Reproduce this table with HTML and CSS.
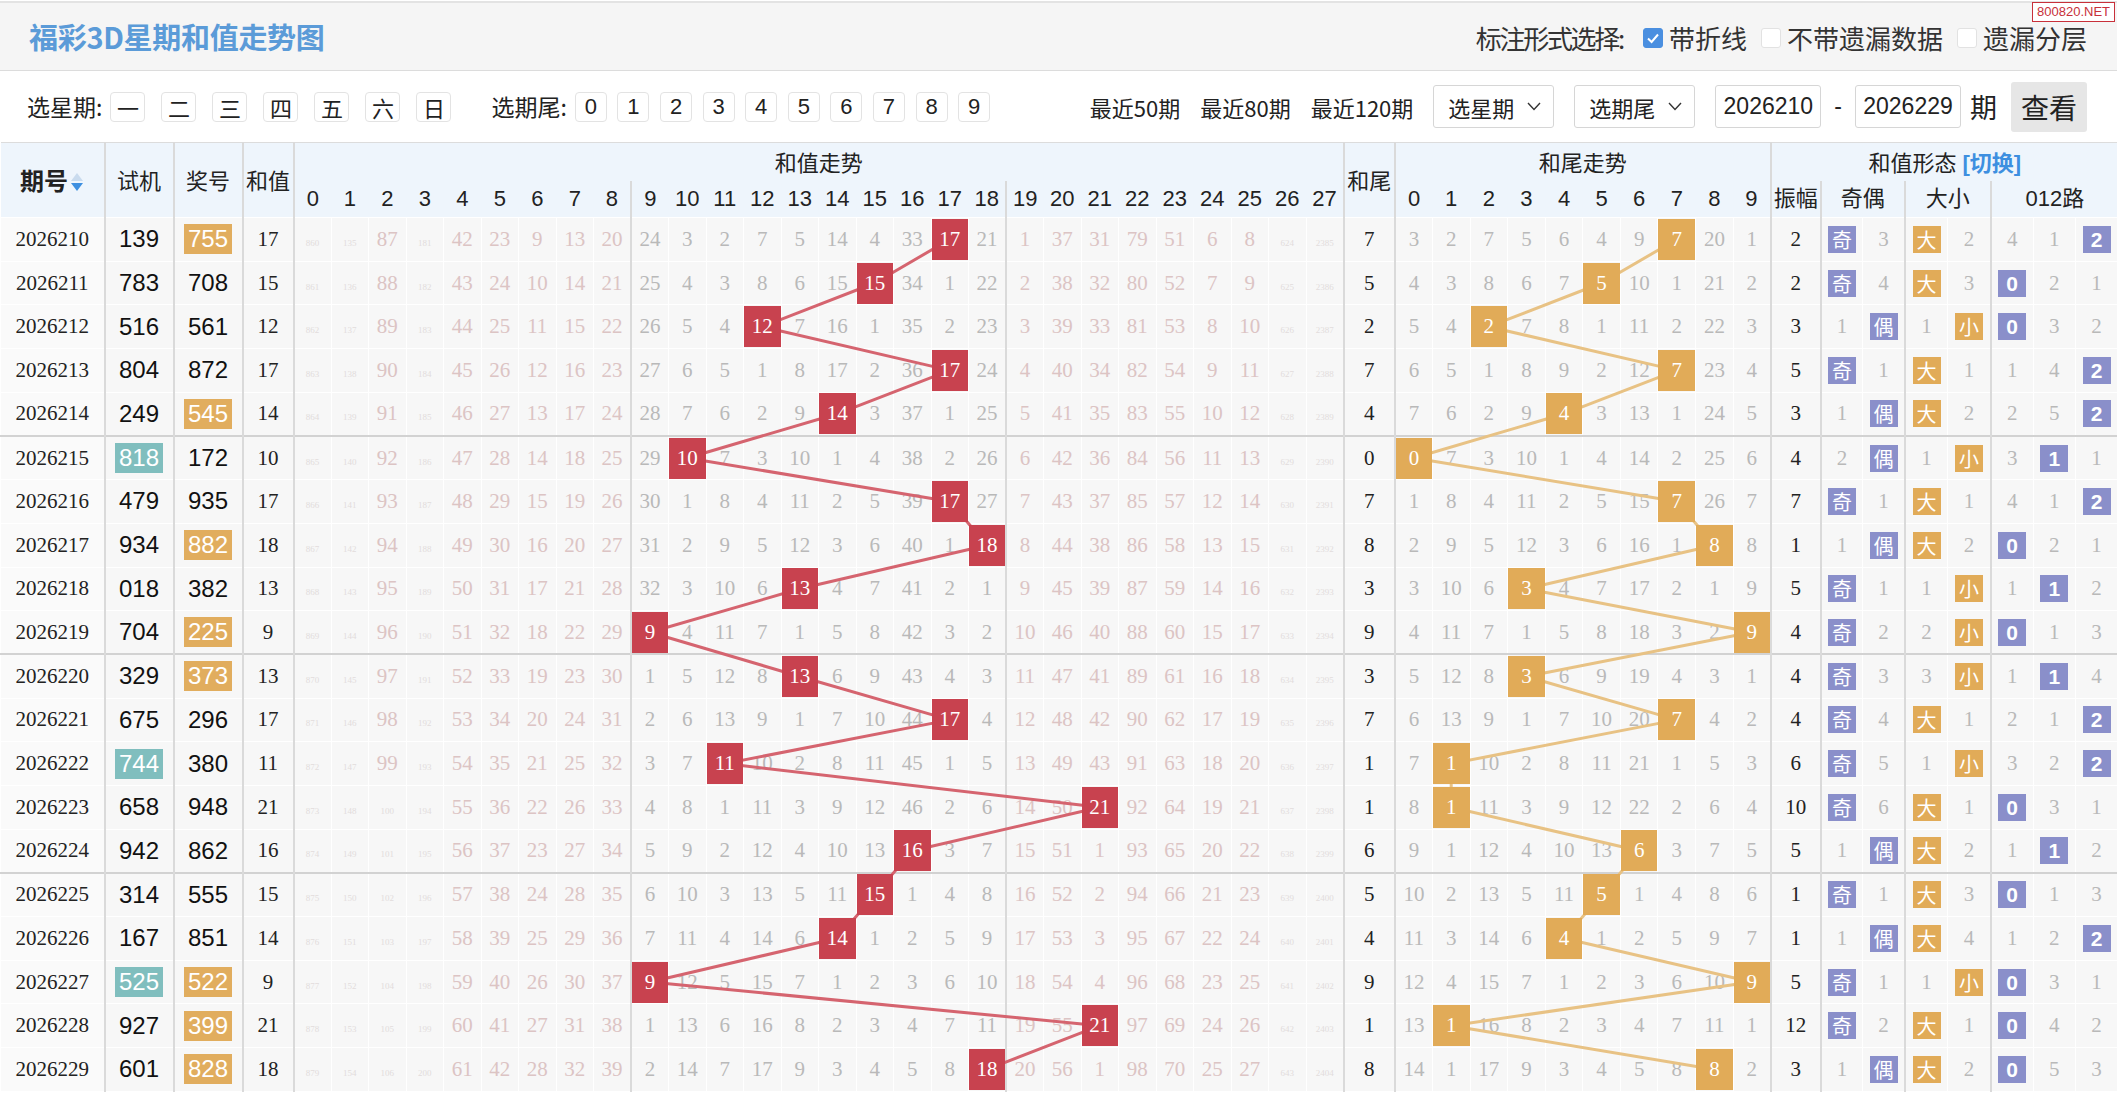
FILE: index.html
```html
<!DOCTYPE html>
<html lang="zh-CN">
<head>
<meta charset="utf-8">
<title>福彩3D星期和值走势图</title>
<link rel="stylesheet" href="styles.css">
</head>
<body>
<header class="topbar">
  <h1 class="title">福彩3D星期和值走势图</h1>
  <div class="marks">
    <span class="marks-label">标注形式选择:</span>
    <span class="opt"><span class="cb on"><svg viewBox="0 0 20 20" width="20" height="20"><path d="M5 10.5 L8.6 14 L15 6.5" fill="none" stroke="#fff" stroke-width="2"/></svg></span>带折线</span>
    <span class="opt"><span class="cb"></span>不带遗漏数据</span>
    <span class="opt"><span class="cb"></span>遗漏分层</span>
  </div>
  <div class="watermark">800820.NET</div>
</header>

<section class="controls">
  <div class="filters">
    <span class="lbl">选星期:</span>
    <span class="btn">一</span><span class="btn">二</span><span class="btn">三</span><span class="btn">四</span><span class="btn">五</span><span class="btn">六</span><span class="btn">日</span>
    <span class="lbl lbl-tail">选期尾:</span>
    <span class="btn dg">0</span><span class="btn dg">1</span><span class="btn dg">2</span><span class="btn dg">3</span><span class="btn dg">4</span><span class="btn dg">5</span><span class="btn dg">6</span><span class="btn dg">7</span><span class="btn dg">8</span><span class="btn dg">9</span>
  </div>
  <div class="range">
    <a class="recent">最近50期</a>
    <a class="recent">最近80期</a>
    <a class="recent">最近120期</a>
    <div class="sel">选星期<svg width="14" height="9" viewBox="0 0 14 9"><path d="M1 1 L7 7.5 L13 1" fill="none" stroke="#333" stroke-width="1.4"/></svg></div>
    <div class="sel">选期尾<svg width="14" height="9" viewBox="0 0 14 9"><path d="M1 1 L7 7.5 L13 1" fill="none" stroke="#333" stroke-width="1.4"/></svg></div>
    <input class="period" type="text" value="2026210">
    <span class="dash">-</span>
    <input class="period" type="text" value="2026229">
    <span class="qi">期</span>
    <button class="go" type="button">查看</button>
  </div>
</section>

<div class="chart" id="chart">
  <table class="trend">
    <colgroup>
      <col class="w-qh"><col class="w-sj"><col class="w-jh"><col class="w-hz">
      <col class="w-n"><col class="w-n"><col class="w-n"><col class="w-n"><col class="w-n"><col class="w-n"><col class="w-n"><col class="w-n"><col class="w-n"><col class="w-n">
      <col class="w-n"><col class="w-n"><col class="w-n"><col class="w-n"><col class="w-n"><col class="w-n"><col class="w-n"><col class="w-n"><col class="w-n"><col class="w-n">
      <col class="w-n"><col class="w-n"><col class="w-n"><col class="w-n"><col class="w-n"><col class="w-n"><col class="w-n"><col class="w-n">
      <col class="w-hw">
      <col class="w-t"><col class="w-t"><col class="w-t"><col class="w-t"><col class="w-t"><col class="w-t"><col class="w-t"><col class="w-t"><col class="w-t"><col class="w-t">
      <col class="w-zf">
      <col class="w-f"><col class="w-f"><col class="w-b"><col class="w-b"><col class="w-r"><col class="w-r"><col class="w-r">
    </colgroup>
    <thead>
      <tr class="h1">
        <th rowspan="2" class="s qh-h">期号<svg class="sort" width="14" height="22" viewBox="0 0 14 22"><path d="M7 2 L13 10 L1 10 Z" fill="#c9dbee"/><path d="M1 12 L13 12 L7 20 Z" fill="#3d8fe0"/></svg></th>
        <th rowspan="2" class="s">试机</th>
        <th rowspan="2" class="s">奖号</th>
        <th rowspan="2" class="s">和值</th>
        <th colspan="28" class="s">和值走势</th>
        <th rowspan="2" class="s">和尾</th>
        <th colspan="10" class="s">和尾走势</th>
        <th colspan="8">和值形态 <span class="sw">[切换]</span></th>
      </tr>
      <tr class="h2">
        <th>0</th><th>1</th><th>2</th><th>3</th><th>4</th><th>5</th><th>6</th><th>7</th><th class="s">8</th>
        <th>9</th><th>10</th><th>11</th><th>12</th><th>13</th><th>14</th><th>15</th><th>16</th><th>17</th><th class="s">18</th>
        <th>19</th><th>20</th><th>21</th><th>22</th><th>23</th><th>24</th><th>25</th><th>26</th><th class="s">27</th>
        <th>0</th><th>1</th><th>2</th><th>3</th><th>4</th><th>5</th><th>6</th><th>7</th><th>8</th><th class="s">9</th>
        <th class="s">振幅</th>
        <th colspan="2" class="s">奇偶</th>
        <th colspan="2" class="s">大小</th>
        <th colspan="3">012路</th>
      </tr>
    </thead>
    <tbody id="tb"></tbody>
  </table>
  <svg class="lines" id="lines"></svg>
</div>
<script src="script.js"></script>
</body>
</html>
```

FILE: styles.css
```css
* { box-sizing: border-box; }
html, body { margin: 0; padding: 0; }
body {
  width: 2117px;
  font-family: "Liberation Sans", "Noto Sans CJK SC", sans-serif;
  color: #222;
  background: #fff;
}

/* ---------- top bar ---------- */
.topbar {
  position: relative;
  margin-top: 1px;
  height: 70px;
  background: #f5f5f5;
  border-top: 2px solid #e3e3e3;
  border-bottom: 1px solid #dcdcdc;
  display: flex;
  align-items: center;
  justify-content: space-between;
  padding: 0 30px 0 29px;
}
.title {
  margin: 0;
  font: bold 29px/1 "Noto Sans CJK SC", sans-serif;
  color: #5b9bd8;
  letter-spacing: -0.3px;
}
.marks {
  display: flex;
  align-items: center;
  font: 26px/1 "Noto Sans CJK SC", sans-serif;
  color: #333;
  padding-top: 2px;
}
.marks-label { margin-right: 6px; letter-spacing: -2.3px; }
.opt { display: flex; align-items: center; margin-left: 14px; }
.opt:first-of-type { margin-left: 0; }
.cb {
  display: inline-block;
  width: 20px; height: 20px;
  border: 1px solid #e2e2e2;
  border-radius: 3px;
  background: #fff;
  margin-right: 6px;
}
.cb svg { display: block; margin: -1px; }
.cb.on { background: #4a8fe0; border-color: #4a8fe0; }
.watermark {
  position: absolute;
  top: -1px; right: 2px;
  background: #fff;
  border: 1px solid #c8303a;
  color: #c8303a;
  font: 13px/18px "Liberation Sans", sans-serif;
  padding: 0 4px;
}

/* ---------- controls ---------- */
.controls {
  height: 71px;
  display: flex;
  align-items: center;
  justify-content: space-between;
  padding: 0 30px 0 27px;
  font: 23px/1 "Noto Sans CJK SC", sans-serif;
  color: #222;
}
.filters { display: flex; align-items: center; }
.lbl { margin-right: 8px; }
.lbl-tail { margin-left: 24px; }
.btn {
  display: inline-flex;
  align-items: center;
  justify-content: center;
  width: 35px; height: 30px;
  margin-right: 16px;
  border: 1px solid #e3e3e3;
  border-radius: 4px;
  background: #fff;
  font-size: 22px;
}
.btn.dg {
  width: 32px;
  margin-right: 10.6px;
  font-family: "Liberation Sans", sans-serif;
}
.range { display: flex; align-items: center; gap: 20px; }
.recent { font-size: 22px; color: #222; text-decoration: none; }
.sel {
  width: 121px; height: 43px;
  display: flex; align-items: center; justify-content: space-between;
  padding: 0 12px 0 14px;
  border: 1px solid #d6d6d6;
  border-radius: 3px;
  background: #fff;
  font-size: 22px;
}
.period {
  width: 106px; height: 43px;
  border: 1px solid #d6d6d6;
  border-radius: 3px;
  font: 23px "Liberation Sans", sans-serif;
  color: #222;
  text-align: center;
  padding: 0;
}
.dash { margin: 0 -7px; font-family: "Liberation Sans", sans-serif; }
.qi { font-size: 27px; margin-left: -11px; }
.go {
  width: 76px; height: 50px;
  border: none;
  border-radius: 3px;
  background: #e6e6e6;
  font: 28px/1 "Noto Sans CJK SC", sans-serif;
  color: #222;
  padding: 0;
  margin-left: -6px;
}

/* ---------- chart table ---------- */
.chart { position: relative; width: 2117px; }
.trend {
  width: 2117px;
  table-layout: fixed;
  border-collapse: collapse;
  border-top: 1px solid #dcdcdc;
}
.w-qh { width: 104px; }
.w-sj { width: 69px; }
.w-jh { width: 69px; }
.w-hz { width: 51px; }
.w-n { width: 37.5px; }
.w-hw { width: 51px; }
.w-t { width: 37.6px; }
.w-zf { width: 50px; }
.w-f { width: 42px; }
.w-b { width: 43px; }
.w-r { width: 42.33px; }

.trend th {
  background: #eef5fc;
  font-weight: normal;
  font-size: 22px;
  line-height: 1;
  height: 37px;
  padding: 0;
  white-space: nowrap;
  border: 0;
  color: #222;
  font-family: "Liberation Sans", "Noto Sans CJK SC", sans-serif;
}
.trend .h1 th { height: 38px; padding-top: 4px; }
.trend th.s { border-right: 2px solid #dadada; }
.trend .qh-h { font-weight: bold; font-size: 24px; }
.sort { vertical-align: -3px; margin-left: 2px; }
.sw { color: #3d8fe0; font-weight: bold; }

.trend td {
  height: 43.7px;
  padding: 0;
  text-align: center;
  background: #f7f7f7;
  border: 1px solid #fff;
  font: 21px/1 "Liberation Serif", serif;
  color: #b9b9b9;
  white-space: nowrap;
}
.trend td.s { border-right: 2px solid #dadada; }
.trend tr.gs td { border-top: 2px solid #d2d2d2; }
.trend td.pk { color: #dcc4c4; }
.trend td.gy { color: #b9b9b9; }
.tiny { font-size: 9px; color: #e2dcdc; }
.gy .tiny { color: #dedede; }

.trend td.qh { color: #222; background: #fafafa; }
.trend td.sj, .trend td.jh {
  font: 24px/1 "Liberation Sans", sans-serif;
  color: #111;
}
.trend td.hz, .trend td.hw, .trend td.zf { color: #222; font-size: 21px; }

.pt, .pj {
  display: inline-block;
  width: 48px; height: 30px;
  line-height: 30px;
  color: #fff;
}
.pt { background: #80bebe; }
.pj { background: #e1ad5e; }

.hit {
  position: relative;
  z-index: 2;
  display: block;
  height: 41px;
  line-height: 41px;
  color: #fff;
  font-size: 21px;
}
.hit.hr { background: #c8424f; }
.hit.ho { background: #e1ab58; }

.fb {
  display: inline-block;
  width: 28px; height: 27px;
  line-height: 27px;
  color: #fff;
  font: 20px/27px "Noto Sans CJK SC", sans-serif;
}
.fb.pu { background: #8a8fca; }
.fb.or { background: #e1ab58; }
.fb.num { font: bold 21px/27px "Liberation Sans", sans-serif; }

.lines {
  position: absolute;
  left: 0; top: 0;
  z-index: 1;
  pointer-events: none;
}
```

FILE: script.js
```js
(function () {
  var draws = [
    ['2026210','139','755'],['2026211','783','708'],['2026212','516','561'],['2026213','804','872'],['2026214','249','545'],
    ['2026215','818','172'],['2026216','479','935'],['2026217','934','882'],['2026218','018','382'],['2026219','704','225'],
    ['2026220','329','373'],['2026221','675','296'],['2026222','744','380'],['2026223','658','948'],['2026224','942','862'],
    ['2026225','314','555'],['2026226','167','851'],['2026227','525','522'],['2026228','927','399'],['2026229','601','828']
  ];
  function dec(a) { return a.map(function (v) { return v - 1; }); }
  var mSum = dec([860,135,87,181,42,23,9,13,20,24,3,2,7,5,14,4,33,0,21,1,37,31,79,51,6,8,624,2385]);
  var mTail = dec([3,2,7,5,6,4,9,0,20,1]);
  var mOE = [0, 2], mBS = [0, 1], mR = [3, 0, 0];

  function step(arr, hit) { for (var i = 0; i < arr.length; i++) arr[i] = (i === hit) ? 0 : arr[i] + 1; }
  function isPair(s) {
    var a = s[0], b = s[1], c = s[2];
    var eq = (a === b) + (b === c) + (a === c);
    return eq === 1;
  }
  function miss(v) { return v >= 100 ? '<span class="tiny">' + v + '</span>' : v; }

  var html = '', prev = null;
  draws.forEach(function (d, i) {
    var sum = (+d[2][0]) + (+d[2][1]) + (+d[2][2]);
    var tail = sum % 10;
    var amp = prev === null ? 2 : Math.abs(sum - prev);
    prev = sum;
    step(mSum, sum); step(mTail, tail);
    var oe = sum % 2 ? 0 : 1, bs = sum >= 14 ? 0 : 1, r = sum % 3;
    step(mOE, oe); step(mBS, bs); step(mR, r);

    var h = '<tr' + (i > 0 && i % 5 === 0 ? ' class="gs"' : '') + '>';
    h += '<td class="qh s">' + d[0] + '</td>';
    h += '<td class="sj s">' + (isPair(d[1]) ? '<span class="pt">' + d[1] + '</span>' : d[1]) + '</td>';
    h += '<td class="jh s">' + (isPair(d[2]) ? '<span class="pj">' + d[2] + '</span>' : d[2]) + '</td>';
    h += '<td class="hz s">' + sum + '</td>';
    for (var c = 0; c < 28; c++) {
      var cls = (c <= 8 || c >= 19) ? 'pk' : 'gy';
      if (c === 8 || c === 18 || c === 27) cls += ' s';
      h += '<td class="' + cls + '">' + (c === sum ? '<span class="hit hr">' + sum + '</span>' : miss(mSum[c])) + '</td>';
    }
    h += '<td class="hw s">' + tail + '</td>';
    for (var t = 0; t < 10; t++) {
      h += '<td class="gy' + (t === 9 ? ' s' : '') + '">' + (t === tail ? '<span class="hit ho">' + t + '</span>' : mTail[t]) + '</td>';
    }
    h += '<td class="zf s">' + amp + '</td>';
    var oeL = ['奇', '偶'];
    for (var k = 0; k < 2; k++) {
      h += '<td class="gy' + (k === 1 ? ' s' : '') + '">' + (k === oe ? '<span class="fb pu">' + oeL[k] + '</span>' : mOE[k]) + '</td>';
    }
    var bsL = ['大', '小'];
    for (k = 0; k < 2; k++) {
      h += '<td class="gy' + (k === 1 ? ' s' : '') + '">' + (k === bs ? '<span class="fb or">' + bsL[k] + '</span>' : mBS[k]) + '</td>';
    }
    for (k = 0; k < 3; k++) {
      h += '<td class="gy">' + (k === r ? '<span class="fb pu num">' + k + '</span>' : mR[k]) + '</td>';
    }
    h += '</tr>';
    html += h;
  });
  document.getElementById('tb').innerHTML = html;

  var chart = document.getElementById('chart');
  var svg = document.getElementById('lines');
  var base = chart.getBoundingClientRect();
  svg.setAttribute('width', chart.offsetWidth);
  svg.setAttribute('height', chart.offsetHeight);
  var NS = 'http://www.w3.org/2000/svg';
  function draw(selector, color) {
    var pts = [];
    document.querySelectorAll(selector).forEach(function (el) {
      var r = el.getBoundingClientRect();
      pts.push((r.left + r.width / 2 - base.left).toFixed(1) + ',' + (r.top + r.height / 2 - base.top).toFixed(1));
    });
    var pl = document.createElementNS(NS, 'polyline');
    pl.setAttribute('points', pts.join(' '));
    pl.setAttribute('fill', 'none');
    pl.setAttribute('stroke', color);
    pl.setAttribute('stroke-width', '3');
    pl.setAttribute('stroke-linejoin', 'round');
    svg.appendChild(pl);
  }
  draw('.hit.hr', '#d5646f');
  draw('.hit.ho', '#e8c284');
})();
```
